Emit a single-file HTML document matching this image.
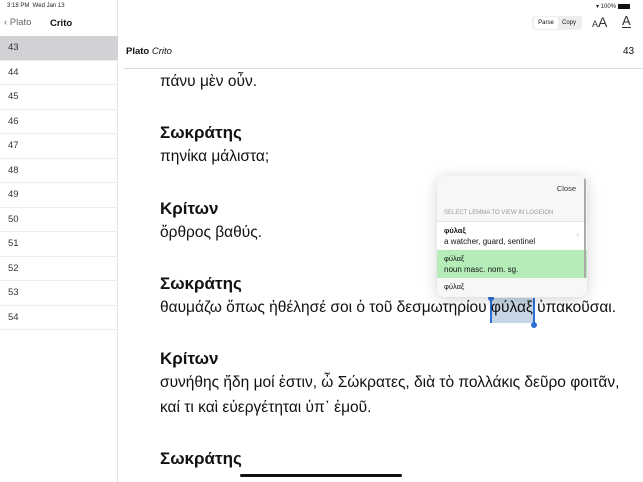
<!DOCTYPE html>
<html><head><meta charset="utf-8"><style>
*{margin:0;padding:0;box-sizing:border-box}
body{width:643px;height:482px;overflow:hidden;background:#fff;font-family:"Liberation Sans","DejaVu Sans",sans-serif;color:#111;position:relative}
.side{position:absolute;left:0;top:0;width:118px;height:482px;background:#fff;border-right:1px solid #e3e3e6}
.sb{position:absolute;font-size:6px;color:#222}
.row{position:absolute;left:0;width:118px;height:24.5px;font-size:9.5px;color:#333;padding-left:8px;line-height:24px;border-bottom:1px solid #eee}
.t{position:absolute;left:160px;font-size:15.5px;white-space:nowrap;color:#111}
.h{position:absolute;left:160px;font-size:17px;font-weight:bold;white-space:nowrap}
</style></head><body>
<div class="side">
<div class="sb" style="left:7px;top:3px">3:18 PM&nbsp; Wed Jan 13</div>
<div style="position:absolute;left:4px;top:17px;font-size:9.5px;color:#666">‹ Plato</div>
<div style="position:absolute;left:50px;top:18px;font-size:9.5px;font-weight:bold">Crito</div>
<div class="row" style="top:36px;background:#d1d1d6">43</div>
<div class="row" style="top:60.5px">44</div>
<div class="row" style="top:85px">45</div>
<div class="row" style="top:109.5px">46</div>
<div class="row" style="top:134px">47</div>
<div class="row" style="top:158.5px">48</div>
<div class="row" style="top:183px">49</div>
<div class="row" style="top:207.5px">50</div>
<div class="row" style="top:232px">51</div>
<div class="row" style="top:256.5px">52</div>
<div class="row" style="top:281px">53</div>
<div class="row" style="top:305.5px">54</div>
</div>
<div class="sb" style="left:596px;top:3px">▾ 100% <span style="display:inline-block;width:12px;height:5px;background:#111;vertical-align:middle"></span></div>
<div style="position:absolute;left:532px;top:16px;width:50px;height:14px;background:#eee;border-radius:3px;font-size:6px;line-height:14px">
<span style="position:absolute;left:2px;top:1px;width:24px;height:12px;background:#fff;border-radius:2px;line-height:12px;text-align:center">Parse</span>
<span style="position:absolute;left:30px">Copy</span></div>
<div style="position:absolute;left:592px;top:14px;font-size:14px;color:#333"><span style="font-size:9px">A</span>A</div>
<div style="position:absolute;left:622px;top:14px;font-size:13px;color:#333;border-bottom:1px solid #333;line-height:13px">A</div>
<div style="position:absolute;left:126px;top:46px;font-size:9.5px"><b>Plato</b> <i>Crito</i></div>
<div style="position:absolute;left:623px;top:46px;font-size:10px">43</div>
<div style="position:absolute;left:124px;top:68px;width:519px;height:1px;background:#ddd"></div>
<div class="t" style="top:73px">πάνυ μὲν οὖν.</div>
<div class="h" style="top:123px">Σωκράτης</div>
<div class="t" style="top:148px">πηνίκα μάλιστα;</div>
<div class="h" style="top:199px">Κρίτων</div>
<div class="t" style="top:224px">ὄρθρος βαθύς.</div>
<div class="h" style="top:274px">Σωκράτης</div>
<div style="position:absolute;left:490px;top:298px;width:45px;height:25px;background:#c7d6e6"></div>
<div style="position:absolute;left:490px;top:298px;width:2px;height:25px;background:#2d6fd6"></div>
<div style="position:absolute;left:533px;top:298px;width:2px;height:25px;background:#2d6fd6"></div>
<div style="position:absolute;left:488px;top:295px;width:6px;height:6px;border-radius:3px;background:#2d6fd6"></div>
<div style="position:absolute;left:531px;top:322px;width:6px;height:6px;border-radius:3px;background:#2d6fd6"></div>
<div class="t" style="top:299px">θαυμάζω ὅπως ἠθέλησέ σοι ὁ τοῦ δεσμωτηρίου φύλαξ ὑπακοῦσαι.</div>
<div class="h" style="top:349px">Κρίτων</div>
<div class="t" style="top:374px">συνήθης ἤδη μοί ἐστιν, ὦ Σώκρατες, διὰ τὸ πολλάκις δεῦρο φοιτᾶν,</div>
<div class="t" style="top:399px">καί τι καὶ εὐεργέτηται ὑπ᾽ ἐμοῦ.</div>
<div class="h" style="top:449px">Σωκράτης</div>
<div style="position:absolute;left:437px;top:176px;width:150px;height:121px;background:#f7f7f7;border-radius:8px;box-shadow:0 2px 14px rgba(0,0,0,.18);overflow:hidden">
<div style="position:absolute;right:11px;top:8px;font-size:7.5px;color:#333">Close</div>
<div style="position:absolute;left:7px;top:34px;font-size:6px;color:#999">SELECT LEMMA TO VIEW IN LOGEION</div>
<div style="position:absolute;left:0;top:45px;width:150px;height:28px;background:#fff;border-top:1px solid #e5e5e5">
<div style="position:absolute;left:7px;top:4px;font-size:7.5px;font-weight:bold">φύλαξ</div>
<div style="position:absolute;left:7px;top:15px;font-size:8px">a watcher, guard, sentinel</div>
<div style="position:absolute;right:8px;top:8px;font-size:8px;color:#bbb">›</div></div>
<div style="position:absolute;left:0;top:74px;width:150px;height:28px;background:#b4edb8">
<div style="position:absolute;left:7px;top:4px;font-size:7.5px">φύλαξ</div>
<div style="position:absolute;left:7px;top:15px;font-size:8px">noun masc. nom. sg.</div></div>
<div style="position:absolute;left:7px;top:106px;font-size:7.5px">φύλαξ</div>
<div style="position:absolute;right:1px;top:2px;width:2px;height:100px;background:#aaa;border-radius:1px"></div>
</div>
<div style="position:absolute;left:240px;top:474px;width:162px;height:3px;border-radius:2px;background:#111"></div>
</body></html>
